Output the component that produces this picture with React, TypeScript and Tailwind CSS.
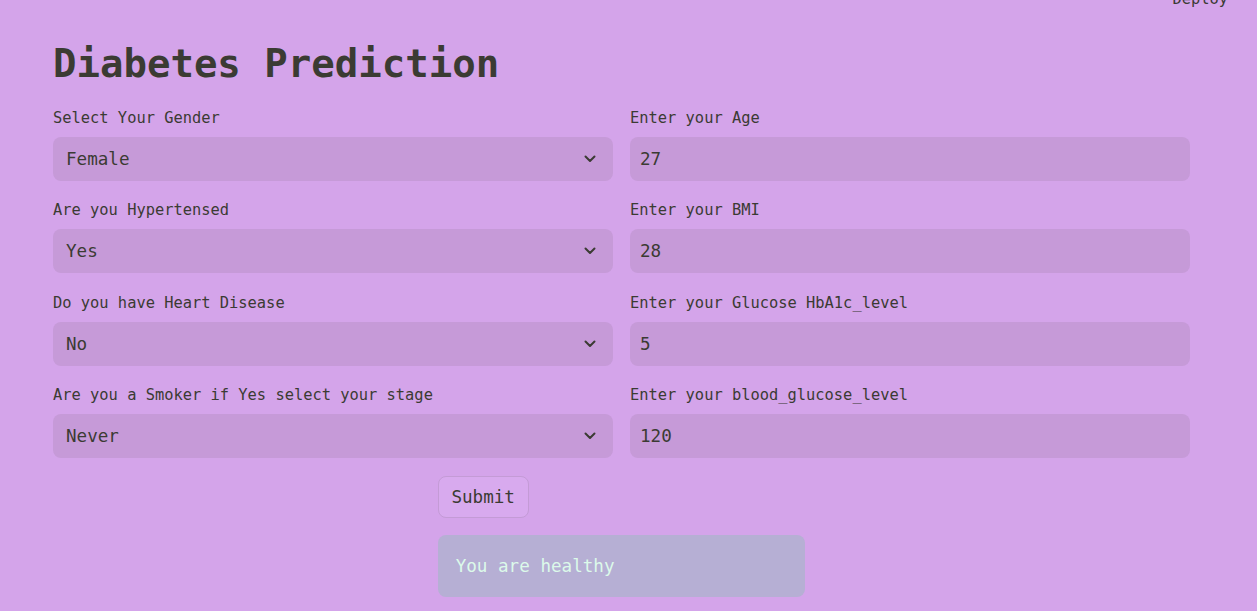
import React from "react";

const mono = { fontFamily: '"DejaVu Sans Mono", "Liberation Mono", monospace' };

function Chevron() {
  return (
    <svg width="12" height="8" viewBox="0 0 12 8" fill="none" className="shrink-0">
      <polyline points="1.5,1.5 6,6 10.5,1.5" stroke="#3b3b33" strokeWidth="2" strokeLinecap="round" strokeLinejoin="round" />
    </svg>
  );
}

function SelectField({ label, value }: { label: string; value: string }) {
  return (
    <div className="flex flex-col">
      <label className="mb-[9px] h-[20px] text-[15.4px] leading-[20px]">{label}</label>
      <div className="flex h-[44px] items-center justify-between rounded-[8px] bg-[#c69ad8] pl-[13px] pr-[17px]">
        <span className="text-[17.6px]">{value}</span>
        <Chevron />
      </div>
    </div>
  );
}

function NumberField({ label, value }: { label: string; value: string }) {
  return (
    <div className="flex flex-col">
      <label className="mb-[9px] h-[20px] text-[15.4px] leading-[20px]">{label}</label>
      <div className="flex h-[44px] items-center rounded-[8px] bg-[#c69ad8] pl-[10px]">
        <span className="text-[17.6px]">{value}</span>
      </div>
    </div>
  );
}

export default function App() {
  const rows: [string, string, string, string][] = [
    ["Select Your Gender", "Female", "Enter your Age", "27"],
    ["Are you Hypertensed", "Yes", "Enter your BMI", "28"],
    ["Do you have Heart Disease", "No", "Enter your Glucose HbA1c_level", "5"],
    ["Are you a Smoker if Yes select your stage", "Never", "Enter your blood_glucose_level", "120"],
  ];

  return (
    <div className="relative h-[611px] w-full overflow-hidden bg-[#d4a4ea] text-[#3b3b33]" style={mono}>
      <div className="absolute right-[29px] top-[-11px] text-[15.4px] leading-[20px]">Deploy</div>

      <div className="ml-[53px] w-[1137px] pt-[40px]">
        <h1 className="mb-[20px] h-[48px] text-[39px] font-bold leading-[48px]">Diabetes Prediction</h1>

        <div className="grid grid-cols-2 gap-x-[17px] gap-y-[19.4px]">
          {rows.map(([l1, v1, l2, v2]) => (
            <React.Fragment key={l1}>
              <SelectField label={l1} value={v1} />
              <NumberField label={l2} value={v2} />
            </React.Fragment>
          ))}
        </div>

        <div className="mt-[18px] grid grid-cols-3 gap-x-[17px]">
          <div />
          <div className="flex flex-col gap-[17px]">
            <button
              type="button"
              className="h-[42px] w-[91px] rounded-[8px] border border-[#c49bd6] bg-[#d8aaee] text-[17.6px] text-[#3b3b33]"
            >
              Submit
            </button>
            <div className="flex h-[62px] items-center rounded-[8px] bg-[#b6afd4] pl-[18px] text-[17.6px] text-[#dcfaea]">
              You are healthy
            </div>
          </div>
          <div />
        </div>
      </div>
    </div>
  );
}
